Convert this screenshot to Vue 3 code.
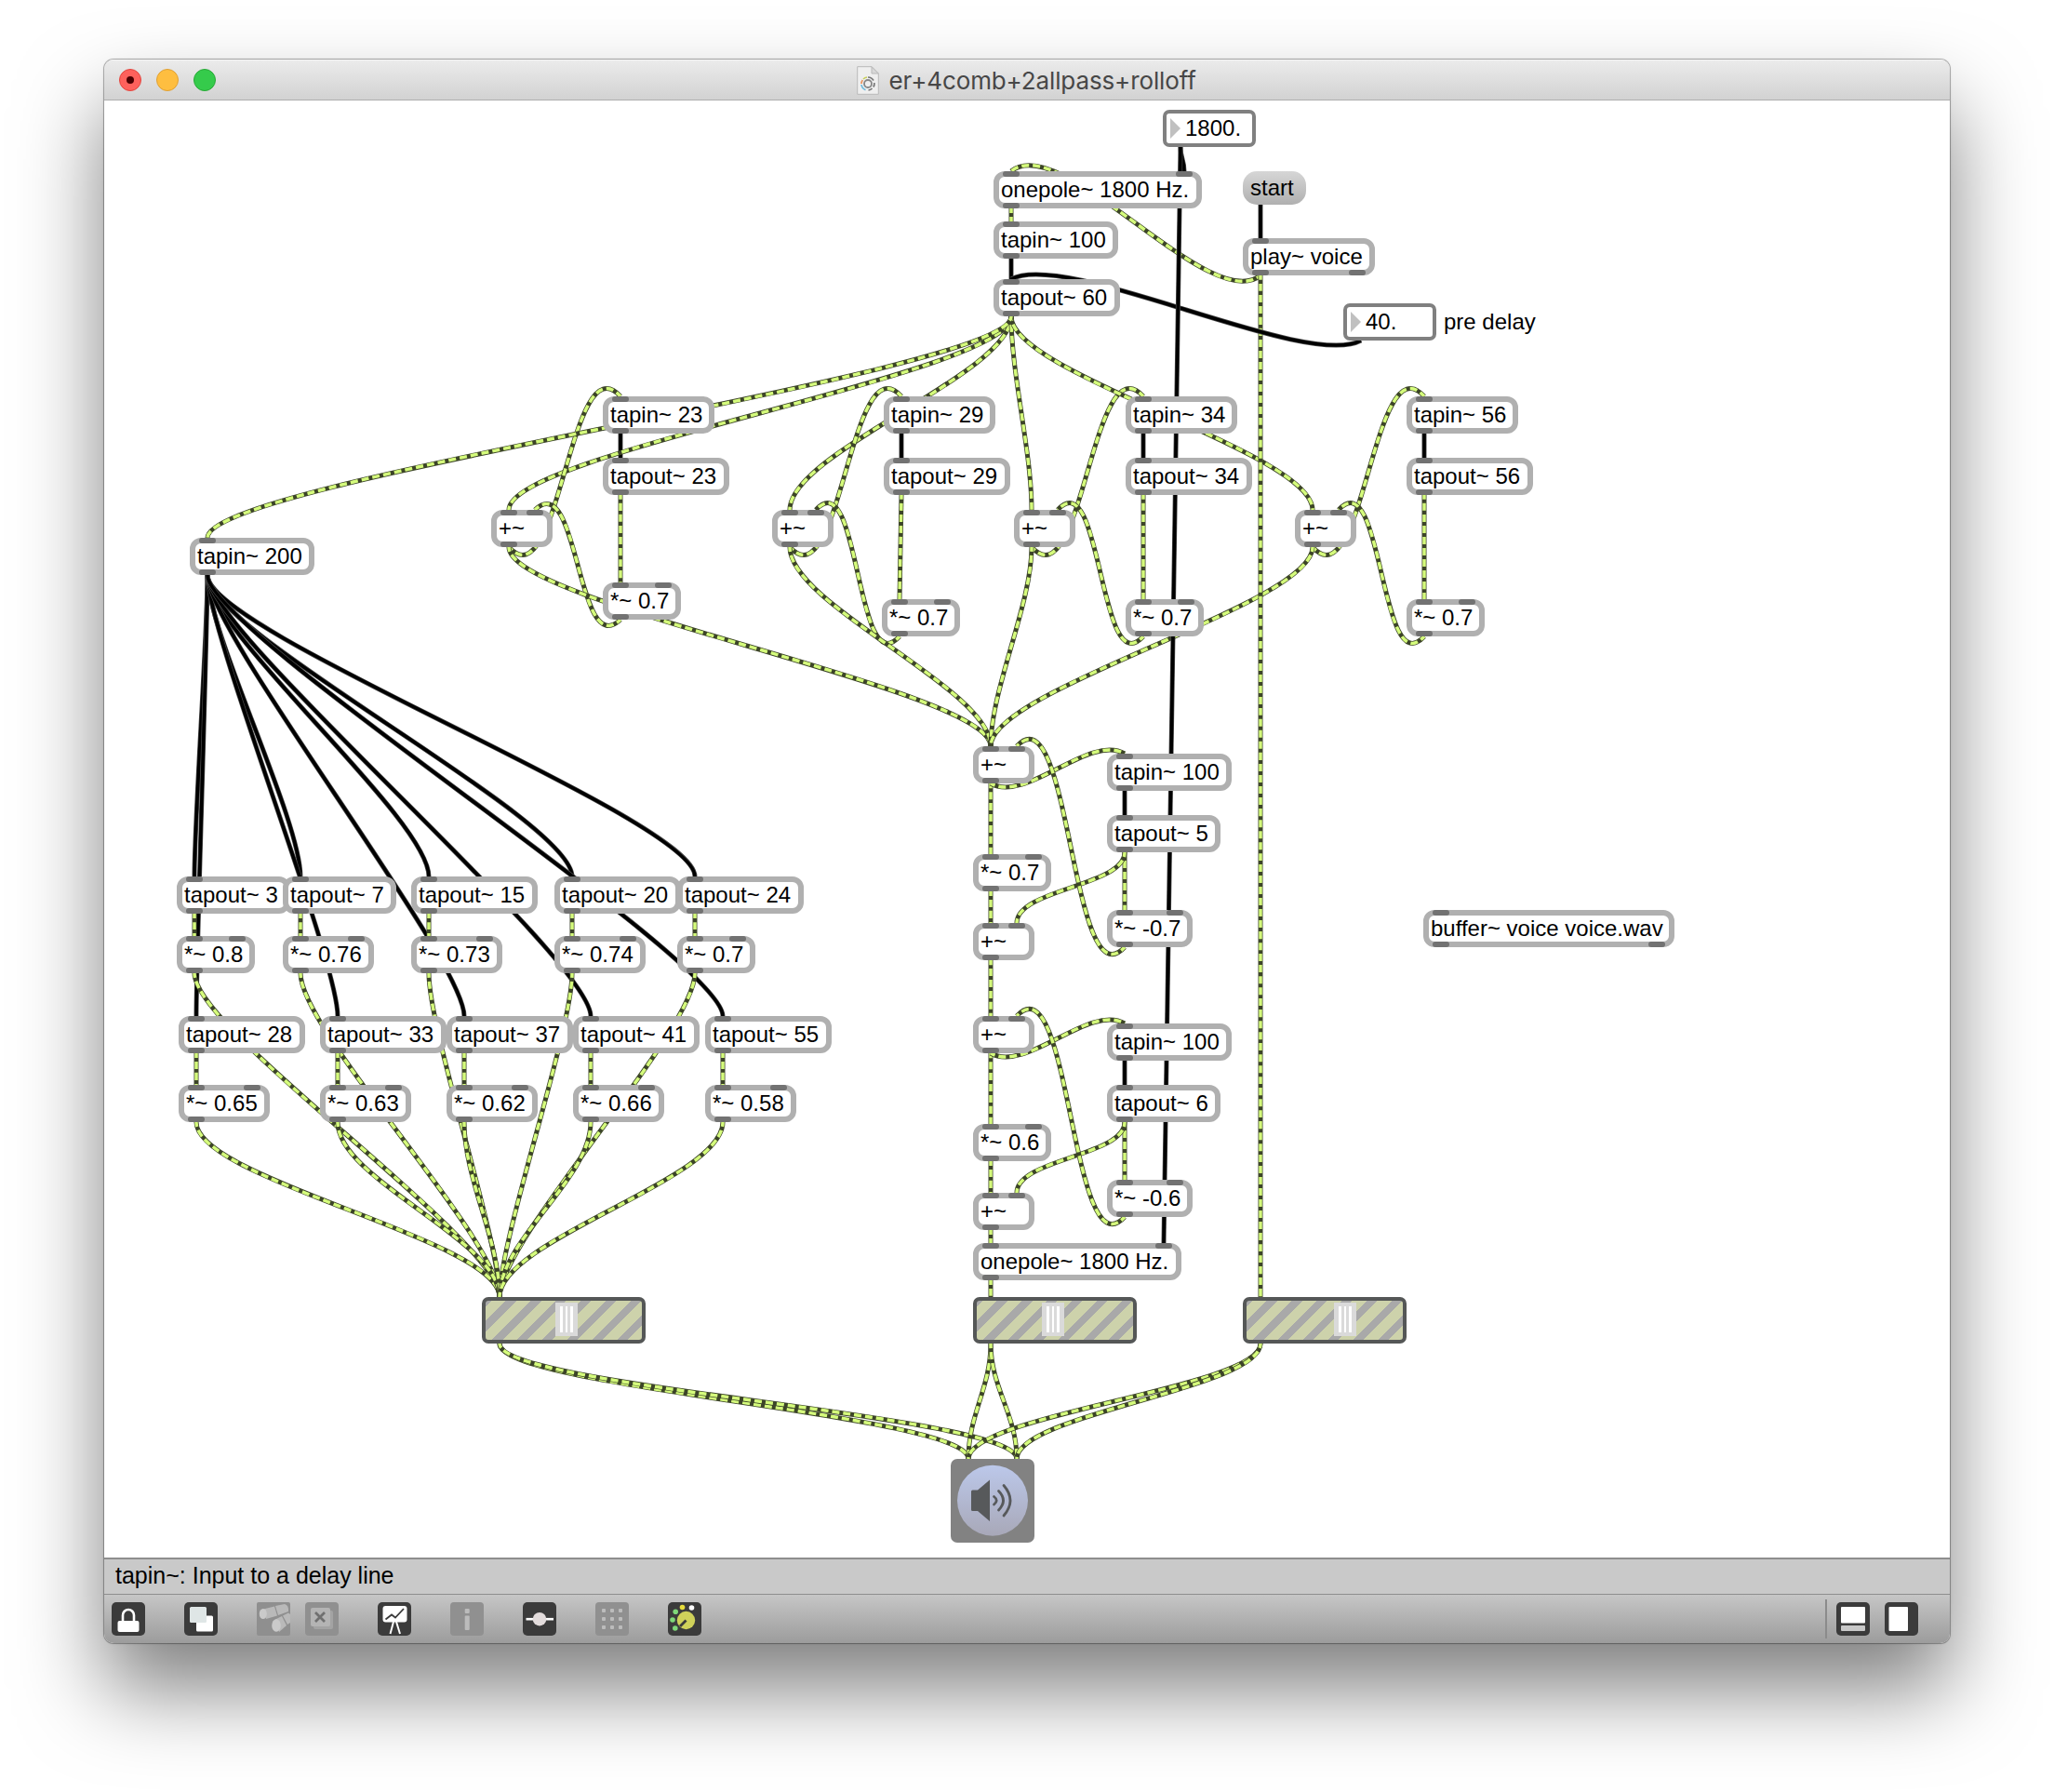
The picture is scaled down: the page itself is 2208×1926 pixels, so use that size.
<script setup>
const ORIGIN_X = 112
const ORIGIN_Y = 108
const PORT = 19

// [text, x, y, width, inlets, outlets]
const objects = [
  ['onepole~ 1800 Hz.', 1068, 184, 224, 2, 1],
  ['tapin~ 100', 1068, 238, 134, 1, 1],
  ['tapout~ 60', 1068, 300, 136, 1, 1],
  ['play~ voice', 1336, 256, 142, 1, 2],
  ['tapin~ 23', 648, 426, 120, 1, 1],
  ['tapout~ 23', 648, 492, 136, 1, 1],
  ['+~', 528, 548, 66, 2, 1],
  ['*~ 0.7', 648, 626, 84, 2, 1],
  ['tapin~ 29', 950, 426, 120, 1, 1],
  ['tapout~ 29', 950, 492, 136, 1, 1],
  ['+~', 830, 548, 66, 2, 1],
  ['*~ 0.7', 948, 644, 84, 2, 1],
  ['tapin~ 34', 1210, 426, 120, 1, 1],
  ['tapout~ 34', 1210, 492, 136, 1, 1],
  ['+~', 1090, 548, 66, 2, 1],
  ['*~ 0.7', 1210, 644, 84, 2, 1],
  ['tapin~ 56', 1512, 426, 120, 1, 1],
  ['tapout~ 56', 1512, 492, 136, 1, 1],
  ['+~', 1392, 548, 66, 2, 1],
  ['*~ 0.7', 1512, 644, 84, 2, 1],
  ['tapin~ 200', 204, 578, 134, 1, 1],
  ['tapout~ 3', 190, 942, 122, 1, 1],
  ['tapout~ 7', 304, 942, 122, 1, 1],
  ['tapout~ 15', 442, 942, 136, 1, 1],
  ['tapout~ 20', 596, 942, 136, 1, 1],
  ['tapout~ 24', 728, 942, 136, 1, 1],
  ['*~ 0.8', 190, 1006, 84, 2, 1],
  ['*~ 0.76', 304, 1006, 98, 2, 1],
  ['*~ 0.73', 442, 1006, 98, 2, 1],
  ['*~ 0.74', 596, 1006, 98, 2, 1],
  ['*~ 0.7', 728, 1006, 84, 2, 1],
  ['tapout~ 28', 192, 1092, 136, 1, 1],
  ['tapout~ 33', 344, 1092, 136, 1, 1],
  ['tapout~ 37', 480, 1092, 136, 1, 1],
  ['tapout~ 41', 616, 1092, 136, 1, 1],
  ['tapout~ 55', 758, 1092, 136, 1, 1],
  ['*~ 0.65', 192, 1166, 98, 2, 1],
  ['*~ 0.63', 344, 1166, 98, 2, 1],
  ['*~ 0.62', 480, 1166, 98, 2, 1],
  ['*~ 0.66', 616, 1166, 98, 2, 1],
  ['*~ 0.58', 758, 1166, 98, 2, 1],
  ['+~', 1046, 802, 66, 2, 1],
  ['*~ 0.7', 1046, 918, 84, 2, 1],
  ['+~', 1046, 992, 66, 2, 1],
  ['tapin~ 100', 1190, 810, 134, 1, 1],
  ['tapout~ 5', 1190, 876, 122, 1, 1],
  ['*~ -0.7', 1190, 978, 92, 2, 1],
  ['+~', 1046, 1092, 66, 2, 1],
  ['*~ 0.6', 1046, 1208, 84, 2, 1],
  ['+~', 1046, 1282, 66, 2, 1],
  ['tapin~ 100', 1190, 1100, 134, 1, 1],
  ['tapout~ 6', 1190, 1166, 122, 1, 1],
  ['*~ -0.6', 1190, 1268, 92, 2, 1],
  ['onepole~ 1800 Hz.', 1046, 1336, 224, 2, 1],
  ['buffer~ voice voice.wav', 1530, 978, 270, 1, 2],
].map(([text, x, y, w, ins, outs]) => ({ text, x, y, w, ins, outs }))

const numbers = [
  { text: '1800.', x: 1250, y: 118 },
  { text: '40.', x: 1444, y: 326 },
]
const sliders = [
  { x: 518, knob: 75 },
  { x: 1046, knob: 70 },
  { x: 1336, knob: 94 },
]

const place = (x, y, w) => ({
  left: x - ORIGIN_X + 'px',
  top: y - ORIGIN_Y + 'px',
  ...(w ? { width: w + 'px' } : {}),
})

// Cubic cord; sag = vertical handle, lean = horizontal handle
function cord(x1, y1, x2, y2, sag, lean = 0) {
  const d = sag ?? Math.min(62, (y2 - y1) * 0.48)
  const a = lean * Math.sign(x2 - x1)
  return `M${x1} ${y1}C${x1 + a} ${y1 + d} ${x2 - a} ${y2 - d} ${x2} ${y2}`
}

const controlBack = []
const signal = []
const controlFront = []

// tapin~ 200 fans out to ten taps
for (const [x, y] of [
  [209, 942], [323, 942], [461, 942], [615, 942], [747, 942],
  [211, 1092], [363, 1092], [499, 1092], [635, 1092], [777, 1092],
]) controlBack.push(cord(223, 618, x, y))

// four comb filters
const combs = [[528, 648, 648, 626], [830, 950, 948, 644], [1090, 1210, 1210, 644], [1392, 1512, 1512, 644]]
for (const [sum, tap, mul, my] of combs) {
  controlBack.push(cord(tap + PORT, 466, tap + PORT, 492))
  signal.push(cord(tap + PORT, 532, mul + PORT, my, 10))
  signal.push(cord(1087, 340, sum + PORT, 548))
  signal.push(cord(sum + PORT, 588, tap + PORT, 426, 60, 55))
  signal.push(cord(mul + PORT, my + 40, sum + 47, 548, my === 626 ? 45 : 52, 48))
  signal.push(cord(sum + PORT, 588, 1065, 802))
}
signal.push(cord(1087, 340, 223, 578))

// two allpass stages
for (const y of [802, 1092]) {
  controlBack.push(cord(1209, y + 48, 1209, y + 74))
  signal.push(cord(1065, y + 40, 1065, y + 116))
  signal.push(cord(1065, y + 156, 1065, y + 190))
  signal.push(cord(1065, y + 40, 1209, y + 8, 22, 38))
  signal.push(cord(1209, y + 114, 1209, y + 176))
  signal.push(cord(1209, y + 114, 1093, y + 190))
  signal.push(cord(1209, y + 216, 1093, y, 62, 58))
}
signal.push(cord(1065, 1032, 1065, 1092))
signal.push(cord(1065, 1322, 1065, 1336))
signal.push(cord(1065, 1376, 1065, 1394))

// early reflections
for (const x of [209, 323, 461, 615, 747]) {
  signal.push(cord(x, 982, x, 1006))
  signal.push(cord(x, 1046, 537, 1394))
}
for (const x of [211, 363, 499, 635, 777]) {
  signal.push(cord(x, 1132, x, 1166))
  signal.push(cord(x, 1206, 537, 1394))
}

// faders to output
for (const x of [537, 1065, 1355]) {
  signal.push(cord(x, 1444, 1041, 1568, 48))
  signal.push(cord(x, 1444, 1093, 1568, 48))
}

signal.push(cord(1087, 224, 1087, 238))
signal.push(cord(1355, 296, 1087, 184, 44, 54))
signal.push(cord(1355, 296, 1355, 1394))
controlBack.push(cord(1087, 278, 1087, 300))
controlBack.push(cord(1355, 220, 1355, 256))
controlFront.push(cord(1463, 366, 1087, 300, 32, 60))
controlFront.push(cord(1269, 158, 1273, 184))
controlFront.push(cord(1269, 158, 1251, 1336))
</script>

<template>
  <div class="desktop">
    <div class="window">
      <header class="titlebar">
        <div class="lights">
          <span class="light red"><i></i></span>
          <span class="light yellow"></span>
          <span class="light green"></span>
        </div>
        <svg class="doc" width="24" height="31" viewBox="0 0 24 31">
          <path d="M.7.7H16L23.3 8V30.3H.7Z" fill="#efefef" stroke="#b9b9b9" />
          <path d="M16 .7V8H23.3Z" fill="#d8d8d8" stroke="#b9b9b9" />
          <g fill="none">
            <circle cx="12" cy="19" r="4" stroke="#888" stroke-width="1.8" />
            <path d="M12 12a7 7 0 0 1 6 3.500M18.900 18a7 7 0 0 1-1 4.500M16.500 24a7 7 0 0 1-4 2" stroke="#777" stroke-width="1.700" />
            <path d="M7 14a7 7 0 0 1 4-2" stroke="#c8cf5a" stroke-width="1.700" />
            <path d="M5 19a7 7 0 0 1 1.300-4" stroke="#e8945f" stroke-width="1.700" />
            <path d="M9.500 25.600A7 7 0 0 1 5 20" stroke="#6db9dc" stroke-width="1.700" />
          </g>
        </svg>
        <span class="title">er+4comb+2allpass+rolloff</span>
      </header>

      <main class="canvas">
        <svg class="cords" width="1984" height="1566" viewBox="112 108 1984 1566" fill="none">
          <g v-for="(d, i) in controlBack" :key="'b' + i">
            <path class="ctl-edge" :d="d" /><path class="ctl" :d="d" />
          </g>
          <g v-for="(d, i) in signal" :key="'s' + i">
            <path class="sig-edge" :d="d" /><path class="sig" :d="d" />
          </g>
          <g v-for="(d, i) in controlFront" :key="'f' + i">
            <path class="ctl-edge" :d="d" /><path class="ctl" :d="d" />
          </g>
        </svg>

        <div v-for="(o, i) in objects" :key="i" class="object" :style="place(o.x, o.y, o.w)">
          <span class="label">{{ o.text }}</span>
          <b class="port in first"></b>
          <b v-if="o.ins > 1" class="port in last"></b>
          <b class="port out first"></b>
          <b v-if="o.outs > 1" class="port out last"></b>
        </div>

        <div v-for="n in numbers" :key="n.text" class="number" :style="place(n.x, n.y)">
          <i class="tri"></i><span>{{ n.text }}</span>
        </div>

        <div class="message" :style="place(1336, 184)">start</div>
        <div class="comment" :style="place(1552, 330)">pre delay</div>

        <div v-for="s in sliders" :key="s.x" class="slider" :style="place(s.x, 1394)">
          <div class="knob" :style="{ marginLeft: s.knob + 'px' }"><i></i><i></i><i></i></div>
        </div>

        <svg class="dac" :style="place(1022, 1568)" width="90" height="90" viewBox="0 0 90 90">
          <defs>
            <linearGradient id="dacFill" x1="0" y1="0" x2="0" y2="1">
              <stop offset="0" stop-color="#bcc8ea" />
              <stop offset="1" stop-color="#a8a8b8" />
            </linearGradient>
          </defs>
          <rect width="90" height="90" rx="7" fill="#828282" />
          <circle cx="45" cy="44.700" r="38" fill="url(#dacFill)" />
          <path d="M22 35Q22 33.500 23.500 33.500H29L42 22.500V67L29 56H23.500Q22 56 22 54.500Z" fill="#57595b" />
          <g fill="none" stroke="#57595b" stroke-width="2.800" stroke-linecap="round">
            <path d="M46.500 40.500Q52 44.700 46.500 49" />
            <path d="M51.500 34.500Q61.500 44.700 51.500 55" />
            <path d="M57 28.500Q71 44.700 57 61" />
          </g>
        </svg>
      </main>

      <div class="status">tapin~: Input to a delay line</div>

      <footer class="toolbar">
        <svg class="tool" viewBox="0 0 36 36">
          <rect width="36" height="36" rx="5" fill="#3b3b3b" />
          <path d="M12 21V14a6 6 0 0 1 12 0V21" fill="none" stroke="#fff" stroke-width="2.600" />
          <rect x="6.500" y="20" width="23" height="12" rx="2" fill="#fff" />
        </svg>
        <svg class="tool gap" viewBox="0 0 36 36">
          <rect width="36" height="36" rx="5" fill="#3b3b3b" />
          <rect x="13" y="14.500" width="18" height="17" rx="1.500" fill="#fff" />
          <rect x="6" y="5" width="18" height="17" rx="1.500" fill="#dfe6e6" />
        </svg>
        <svg class="tool gap" viewBox="0 0 36 36">
          <rect width="36" height="36" rx="2" fill="#8f8f8f" />
          <path d="M7 7.500 19 4.500 22 14.500 10 18Z" fill="#b9b9b9" />
          <path d="M20 4 30 2Q34.500 3 34 10L23 14Z" fill="#b9b9b9" />
          <ellipse cx="6.800" cy="12.500" rx="4" ry="5.500" fill="#cacaca" />
          <path d="M20 18.500 27 15 32 25 24 32Z" fill="#b9b9b9" />
          <path d="M28 14.500 34 11.500 36 13V22L33 24Z" fill="#b9b9b9" />
          <ellipse cx="21" cy="25" rx="4.800" ry="6.800" fill="#cacaca" />
        </svg>
        <svg class="tool near" viewBox="0 0 36 36">
          <rect width="36" height="36" rx="4" fill="#909090" />
          <rect x="9" y="9" width="21" height="20" rx="2" fill="#a3a3a3" />
          <rect x="6" y="6" width="21" height="20" rx="2" fill="#b4b4b4" />
          <path d="M11 11 21 21M21 11 11 21" stroke="#707070" stroke-width="2.800" />
        </svg>
        <svg class="tool wide" viewBox="0 0 36 36">
          <rect width="36" height="36" rx="5" fill="#3b3b3b" />
          <rect x="5.500" y="4" width="26" height="17.500" rx="3" fill="#fff" />
          <path d="M8.500 18.500 15 13.500 19 16.500 28 7" fill="none" stroke="#3b3b3b" stroke-width="1.800" />
          <path d="M17 21 13.500 34M20 21 24 34" stroke="#fff" stroke-width="2" />
        </svg>
        <svg class="tool gap" viewBox="0 0 36 36">
          <rect width="36" height="36" rx="4" fill="#909090" />
          <rect x="15.700" y="7" width="5" height="5" rx="1" fill="#bcbcbc" />
          <rect x="15.700" y="14.500" width="5" height="15.500" rx="1" fill="#bcbcbc" />
        </svg>
        <svg class="tool gap" viewBox="0 0 36 36">
          <rect width="36" height="36" rx="5" fill="#3b3b3b" />
          <path d="M3.500 18.200H33" stroke="#fff" stroke-width="2.600" />
          <circle cx="18" cy="18.200" r="7.300" fill="#e3dcdc" />
        </svg>
        <svg class="tool gap" viewBox="0 0 36 36">
          <rect width="36" height="36" rx="4" fill="#909090" />
          <g fill="#bcbcbc">
            <template v-for="r in 3" :key="r">
              <rect v-for="c in 3" :key="c" :x="9 * c - 2" :y="9 * r - 2" width="4" height="4" rx="1" />
            </template>
          </g>
        </svg>
        <svg class="tool gap" viewBox="0 0 36 36">
          <rect width="36" height="36" rx="5" fill="#3b3b3b" />
          <circle cx="19.500" cy="19.500" r="9.700" fill="#cfd15a" />
          <path d="M19.500 19.500 13 26" stroke="#3b3b3b" stroke-width="2.800" />
          <circle cx="7.800" cy="28" r="2.800" fill="#7fd879" />
          <circle cx="5" cy="19" r="2.800" fill="#7fd879" />
          <circle cx="8.200" cy="10.300" r="2.800" fill="#7fd879" />
          <circle cx="15.500" cy="5.500" r="2.800" fill="#e6dc3c" />
          <circle cx="25.500" cy="6" r="2.800" fill="#fff" />
        </svg>
        <span class="divider"></span>
        <svg class="tool" viewBox="0 0 36 36">
          <rect width="36" height="36" rx="5" fill="#3b3b3b" />
          <rect x="5" y="5" width="26" height="17.500" rx="1" fill="#fff" />
          <rect x="5" y="25" width="26" height="6" rx="1" fill="#c8c8c8" />
        </svg>
        <svg class="tool side" viewBox="0 0 36 36">
          <rect width="36" height="36" rx="5" fill="#3b3b3b" />
          <rect x="4.500" y="5" width="20.500" height="26" rx="1" fill="#fff" />
        </svg>
      </footer>
    </div>
  </div>
</template>

<style>
body {
  margin: 0;
  background: #fff;
}
</style>

<style scoped>
.desktop {
  box-sizing: border-box;
  width: 2208px;
  height: 1926px;
  padding: 64px 112px 0;
  overflow: hidden;
  background: #fff;
  font-family: "Liberation Sans", Arial, sans-serif;
  font-size: 24px;
  color: #000;
}
.window {
  display: flex;
  flex-direction: column;
  width: 1984px;
  height: 1702px;
  border-radius: 10px;
  overflow: hidden;
  background: #fff;
  box-shadow: 0 0 0 1px rgba(0, 0, 0, 0.25), 0 0 3px rgba(0, 0, 0, 0.2), 0 50px 90px rgba(0, 0, 0, 0.5);
}
.titlebar {
  box-sizing: border-box;
  position: relative;
  flex: none;
  display: flex;
  align-items: center;
  height: 44px;
  border-top: 1px solid #f5f5f5;
  border-bottom: 1px solid #aeaeae;
  background: linear-gradient(#ebebeb, #d2d2d2);
}
.lights {
  display: flex;
  gap: 16px;
  width: 793px;
  padding-left: 16px;
}
.light {
  box-sizing: border-box;
  display: flex;
  align-items: center;
  justify-content: center;
  width: 24px;
  height: 24px;
  border-radius: 50%;
}
.light i {
  width: 8px;
  height: 8px;
  border-radius: 50%;
  background: #4c0002;
}
.red { background: #fe615c; border: 1px solid #e2463f; }
.yellow { background: #febe40; border: 1px solid #dfa034; }
.green { background: #35cb4b; border: 1px solid #27a836; }
.doc { flex: none; }
.title {
  margin-left: 10.500px;
  padding-top: 1px;
  font-family: Inter, "Noto Sans", sans-serif;
  font-size: 26px;
  letter-spacing: -0.120px;
  line-height: 42px;
  color: #474747;
  white-space: nowrap;
}
.canvas {
  position: relative;
  flex: none;
  height: 1566px;
  background: #fff;
}
.cords { display: block; }
.ctl-edge { stroke: #4a4a4a; stroke-width: 5; }
.ctl { stroke: #000; stroke-width: 3.600; }
.sig-edge { stroke: #3c4428; stroke-width: 5; }
.sig { stroke: #d5fc7c; stroke-width: 3.500; stroke-dasharray: 8 4; stroke-dashoffset: 3; }
.object {
  box-sizing: border-box;
  position: absolute;
  height: 40px;
  border: 6px solid #b0b0b0;
  border-radius: 12px;
  background: #fff;
}
.label {
  display: block;
  margin-left: 2px;
  line-height: 28px;
  white-space: nowrap;
}
.port {
  position: absolute;
  width: 18px;
  height: 6px;
  border-radius: 3px;
  background: #727272;
}
.in { top: -6px; }
.out { bottom: -6px; }
.first { left: 4px; }
.last { right: 4px; }
.number {
  box-sizing: border-box;
  position: absolute;
  display: flex;
  align-items: center;
  width: 100px;
  height: 40px;
  padding-left: 4px;
  border: 4px solid #808080;
  border-radius: 7px;
  background: #fff;
  line-height: 32px;
}
.tri {
  width: 0;
  height: 0;
  margin-right: 5px;
  border: 11.500px solid transparent;
  border-left: 11px solid #c0c0c0;
  border-right: 0;
}
.message {
  position: absolute;
  width: 60px;
  padding-left: 8px;
  height: 36px;
  border-radius: 15px;
  background: linear-gradient(#d6d6d6, #b0b0b0);
  line-height: 36px;
}
.comment {
  position: absolute;
  line-height: 32px;
  white-space: nowrap;
}
.slider {
  box-sizing: border-box;
  position: absolute;
  width: 176px;
  height: 50px;
  padding-top: 2px;
  border: 4px solid #555757;
  border-radius: 7px;
  background: repeating-linear-gradient(-45deg, #cdd2ab 0 11px, #a9a9a9 11px 19px);
}
.knob {
  display: flex;
  justify-content: center;
  gap: 3px;
  width: 24px;
  height: 36px;
  background: #dadada;
}
.knob i {
  width: 2.500px;
  height: 28px;
  margin-top: 4px;
  background: #fff;
}
.dac { position: absolute; }
.status {
  box-sizing: border-box;
  flex: none;
  height: 40px;
  padding-left: 12px;
  border-top: 2px solid #8e8e8e;
  border-bottom: 1px solid #8e8e8e;
  background: #c9c9c9;
  font-size: 25px;
  line-height: 35px;
}
.toolbar {
  box-sizing: border-box;
  flex: 1;
  display: flex;
  align-items: flex-start;
  padding: 8px 34px 0 8px;
  background: linear-gradient(#c6c6c6, #9c9c9c);
}
.tool {
  flex: none;
  width: 36px;
  height: 36px;
}
.gap, .wide { margin-left: 42px; }
.near { margin-left: 16px; }
.side { margin-left: 16px; }
.divider {
  width: 2px;
  height: 42px;
  margin: -3px 10px 0 auto;
  background: #8b8b8b;
}
</style>
